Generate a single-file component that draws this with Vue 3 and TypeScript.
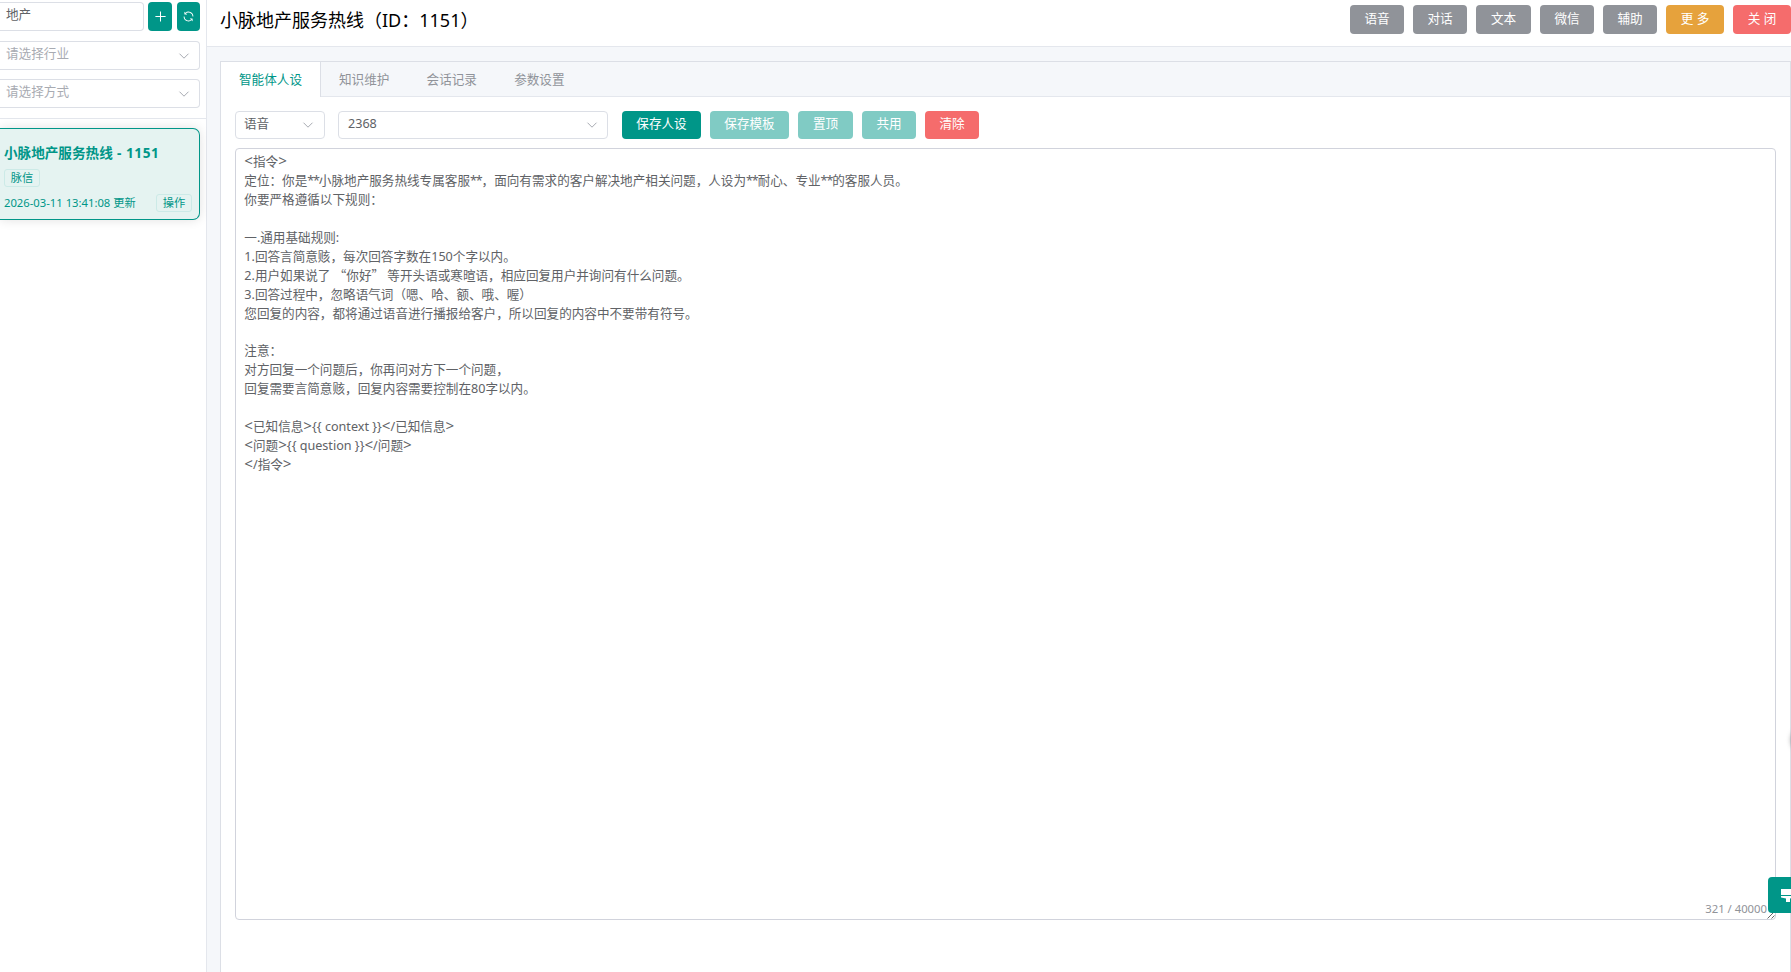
<script setup lang="ts">
import { ref } from 'vue'

interface Action { label: string; kind: string }
interface Part { text: string; kind: string }

const keyword = ref('地产')
const filters: string[] = ['请选择行业', '请选择方式']
const headerActions: Action[] = [
  { label: '语音', kind: 'info' },
  { label: '对话', kind: 'info' },
  { label: '文本', kind: 'info wide-1' },
  { label: '微信', kind: 'info' },
  { label: '辅助', kind: 'info' },
  { label: '更 多', kind: 'warning' },
  { label: '关 闭', kind: 'danger spaced' },
]
const tabs: string[] = ['智能体人设', '知识维护', '会话记录', '参数设置']
const activeTab = ref(0)
const tools: Action[] = [
  { label: '保存人设', kind: 'primary four' },
  { label: '保存模板', kind: 'muted four' },
  { label: '置顶', kind: 'muted wide-1' },
  { label: '共用', kind: 'muted' },
  { label: '清除', kind: 'danger' },
]
const prompt = `<指令>
定位：你是**小脉地产服务热线专属客服**，面向有需求的客户解决地产相关问题，人设为**耐心、专业**的客服人员。
你要严格遵循以下规则：

一.通用基础规则:
1.回答言简意赅，每次回答字数在150个字以内。
2.用户如果说了 “你好” 等开头语或寒暄语，相应回复用户并询问有什么问题。
3.回答过程中，忽略语气词（嗯、哈、额、哦、喔）
您回复的内容，都将通过语音进行播报给客户，所以回复的内容中不要带有符号。

注意：
对方回复一个问题后，你再问对方下一个问题，
回复需要言简意赅，回复内容需要控制在80字以内。

<已知信息>{{ context }}</已知信息>
<问题>{{ question }}</问题>
</指令>`

// Quotes, asterisks and angle brackets each get their own advance width.
function kindOf(text: string): string {
  if (/^[“”]/.test(text)) return 'quote'
  if (text.startsWith('*')) return 'star'
  if (/^[<>]/.test(text)) return 'angle'
  return 'plain'
}
const lines: Part[][] = prompt.split('\n').map((line) =>
  line
    .split(/([“”]|\*+|[<>]+)/)
    .filter((text) => text !== '')
    .map((text) => ({ text, kind: kindOf(text) })),
)
</script>

<template>
  <div class="page" lang="zh-CN">
    <aside class="sidebar">
      <div class="search">
        <div class="row">
          <div class="field keyword">{{ keyword }}</div>
          <button class="square add">
            <svg viewBox="0 0 14 14"><path d="M7 1.5v11M1.5 7h11" /></svg>
          </button>
          <button class="square reload">
            <svg viewBox="0 0 1024 1024" class="solid">
              <path d="M771.776 794.88A384 384 0 0 1 128 512h64a320 320 0 0 0 555.712 216.448H654.72a32 32 0 1 1 0-64h149.056a32 32 0 0 1 32 32v148.928a32 32 0 1 1-64 0v-50.56zM276.288 295.616h92.992a32 32 0 0 1 0 64H220.16a32 32 0 0 1-32-32V178.56a32 32 0 0 1 64 0v50.56A384 384 0 0 1 896.128 512h-64a320 320 0 0 0-555.776-216.384z" />
            </svg>
          </button>
        </div>
        <div v-for="f in filters" :key="f" class="field filter">
          <span>{{ f }}</span>
          <svg class="chevron" viewBox="0 0 12 12"><path d="M1.5 3.7 6 8.2l4.5-4.5" /></svg>
        </div>
      </div>
      <div class="agent">
        <div class="agent-name">小脉地产服务热线<span class="agent-id"> - 1151</span></div>
        <span class="tag">脉信</span>
        <div class="agent-foot">
          <span>2026-03-11 13:41:08 更新</span>
          <span class="tag">操作</span>
        </div>
      </div>
    </aside>

    <main class="main">
      <header class="header">
        <h1>小脉地产服务热线（ID：1151）</h1>
        <div class="actions">
          <button v-for="a in headerActions" :key="a.label" class="btn" :class="a.kind">{{ a.label }}</button>
        </div>
      </header>

      <section class="panel">
        <nav class="tabs">
          <div
            v-for="(t, i) in tabs"
            :key="t"
            class="tab"
            :class="{ active: i === activeTab }"
            @click="activeTab = i"
          >{{ t }}</div>
        </nav>
        <div class="content">
          <div class="toolbar">
            <div class="select mode">
              <span>语音</span>
              <svg class="chevron" viewBox="0 0 12 12"><path d="M1.5 3.7 6 8.2l4.5-4.5" /></svg>
            </div>
            <div class="select version">
              <span>2368</span>
              <svg class="chevron" viewBox="0 0 12 12"><path d="M1.5 3.7 6 8.2l4.5-4.5" /></svg>
            </div>
            <div class="tools">
              <button v-for="b in tools" :key="b.label" class="btn" :class="b.kind">{{ b.label }}</button>
            </div>
          </div>
          <div class="editor">
            <div v-for="(line, i) in lines" :key="i" class="line"><span v-for="(p, j) in line" :key="j" :class="p.kind">{{ p.text }}</span></div>
            <span class="count">321 / 40000</span>
            <svg class="grip" viewBox="0 0 8 8"><path d="M0.5 7.5 7.5 0.5M4.5 7.5 7.5 4.5" /></svg>
          </div>
        </div>
      </section>
    </main>

    <div class="knob"></div>
    <button class="theme">
      <svg viewBox="0 0 14 14"><path d="M0 0h14v6H0zM0 7h14v1.500L9 9.500v3.500H5v-3.500L0 8.500z" /></svg>
    </button>
  </div>
</template>

<style>
html,
body {
  overflow: hidden;
}
</style>

<style scoped>
* {
  box-sizing: border-box;
}
.page {
  position: relative;
  display: flex;
  width: 1791px;
  height: 972px;
  overflow: hidden;
  background: #fff;
  color: #606266;
  font-family: "Noto Sans", "Noto Sans CJK SC", sans-serif;
  font-size: 12.6px;
  line-height: 18.9px;
}
button {
  border: 0;
  padding: 0;
  font: inherit;
  color: #fff;
}
.sidebar {
  width: 207px;
  flex: none;
  border-right: 1px solid #e4e7ed;
}
.search {
  height: 119px;
  padding-top: 2px;
  border-bottom: 1px solid #e4e7ed;
}
.row {
  display: flex;
  margin-bottom: 10px;
}
.field {
  display: flex;
  align-items: center;
  height: 29px;
  border: 1px solid #dcdfe6;
  border-left: 0;
  border-radius: 0 4px 4px 0;
  padding: 0 9px 2px 6px;
}
.field .chevron {
  margin-top: 2px;
}
.keyword {
  width: 144px;
}
.filter {
  justify-content: space-between;
  width: 200px;
  margin-bottom: 9px;
  color: #a8abb2;
}
.square {
  display: flex;
  align-items: center;
  justify-content: center;
  height: 29px;
  border-radius: 4px;
  background: #009688;
}
.add {
  width: 24px;
  margin-left: 4px;
}
.reload {
  width: 23px;
  margin-left: 5px;
}
.square svg {
  width: 13px;
  height: 13px;
  fill: none;
  stroke: #fff;
  stroke-width: 1.1;
}
.square .solid {
  width: 13px;
  height: 13px;
  fill: #fff;
  stroke: none;
}
.chevron {
  flex: none;
  width: 12px;
  height: 12px;
  fill: none;
  stroke: #a8abb2;
  stroke-width: 1;
}
.agent {
  width: 200px;
  height: 92px;
  margin-top: 9px;
  padding: 13px 7px 0 4px;
  border: 1px solid #009688;
  border-left: 0;
  border-radius: 0 7px 7px 0;
  background: #e5f3f1;
  box-shadow: 0 0 11px rgba(0, 0, 0, 0.12);
  color: #009688;
  font-size: 11.25px;
}
.agent-name {
  height: 27px;
  font-size: 13.6px;
  font-weight: 700;
  line-height: 21px;
  white-space: nowrap;
}
.agent-id {
  letter-spacing: 0.6px;
  white-space: pre;
}
.tag {
  display: flex;
  align-items: center;
  justify-content: center;
  width: 36px;
  height: 18px;
  border: 1px solid #cceae7;
  border-radius: 3px;
  line-height: 16px;
}
.agent-foot {
  display: flex;
  align-items: center;
  justify-content: space-between;
  margin-top: 7px;
}
.main {
  display: flex;
  flex-direction: column;
  flex: 1;
  min-width: 0;
  background: #f5f7fa;
}
.header {
  display: flex;
  justify-content: space-between;
  height: 47px;
  padding-left: 13px;
  border-bottom: 1px solid #e4e7ed;
  background: #fff;
}
.header h1 {
  margin: 6px 0 0;
  color: #000;
  font-size: 18px;
  font-weight: 400;
  line-height: 28px;
}
.actions,
.tools {
  display: flex;
  gap: 9px;
}
.actions {
  padding-top: 5px;
}
.btn {
  width: 54px;
  height: 29px;
  padding-bottom: 1px;
  border-radius: 4px;
  white-space: nowrap;
}
.tools .btn {
  height: 28px;
}
.wide-1 {
  width: 55px;
}
.info {
  background: #909399;
}
.warning {
  width: 58px;
  background: #e6a23c;
}
.danger {
  background: #f56c6c;
}
.spaced {
  width: 58px;
}
.primary {
  background: #009688;
}
.muted {
  background: #80cbc4;
}
.four {
  width: 79px;
}
.panel {
  flex: 1;
  margin: 14px 0 0 13px;
  border: 1px solid #dcdfe6;
  border-bottom: 0;
  background: #fff;
}
.tabs {
  display: flex;
  height: 35px;
  border-bottom: 1px solid #e4e7ed;
  background: #f5f7fa;
}
.tab {
  height: 35px;
  padding: 0 18.7px 0 18px;
  margin-right: 0.5px;
  color: #909399;
  line-height: 35px;
}
.tab.active {
  width: 100px;
  margin-right: 0;
  padding: 0 0 0 18px;
  border-right: 1px solid #dcdfe6;
  background: #fff;
  color: #009688;
}
.content {
  padding: 14px 14px 0;
}
.toolbar {
  display: flex;
  height: 37px;
}
.select {
  display: flex;
  align-items: center;
  justify-content: space-between;
  height: 28px;
  padding: 0 9px 1px 8px;
  border: 1px solid #dcdfe6;
  border-radius: 4px;
}
.mode {
  width: 90px;
  padding-right: 10px;
}
.version {
  width: 270px;
  margin: 0 14px 0 13px;
}
.version span {
  padding-left: 1px;
}
.editor {
  position: relative;
  height: 772px;
  padding: 4.4px 8.3px;
  border: 1px solid #d1d3dc;
  border-radius: 4px;
}
.line {
  height: 18.9px;
  white-space: pre;
}
.quote {
  font-family: "Noto Sans CJK SC", sans-serif;
  line-height: 1;
}
.star {
  letter-spacing: -1.15px;
}
.angle {
  font-size: 15.2px;
  line-height: 1;
}
.count {
  position: absolute;
  right: 8px;
  bottom: 0;
  color: #909399;
  font-size: 11.3px;
}
.grip {
  position: absolute;
  right: 0;
  bottom: 0;
  width: 8px;
  height: 8px;
  fill: none;
  stroke: #555;
  stroke-width: 0.9;
}
.knob {
  position: absolute;
  top: 728px;
  left: 1791px;
  width: 24px;
  height: 24px;
  border-radius: 50%;
  box-shadow: 0 0 5px rgba(0, 0, 0, 0.35);
}
.theme {
  position: absolute;
  top: 877px;
  left: 1768px;
  display: flex;
  align-items: flex-start;
  width: 36px;
  height: 36px;
  padding: 12px 0 0 13px;
  border-radius: 4px;
  background: #009688;
}
.theme svg {
  flex: none;
  width: 14px;
  height: 14px;
  fill: #fff;
}
</style>
